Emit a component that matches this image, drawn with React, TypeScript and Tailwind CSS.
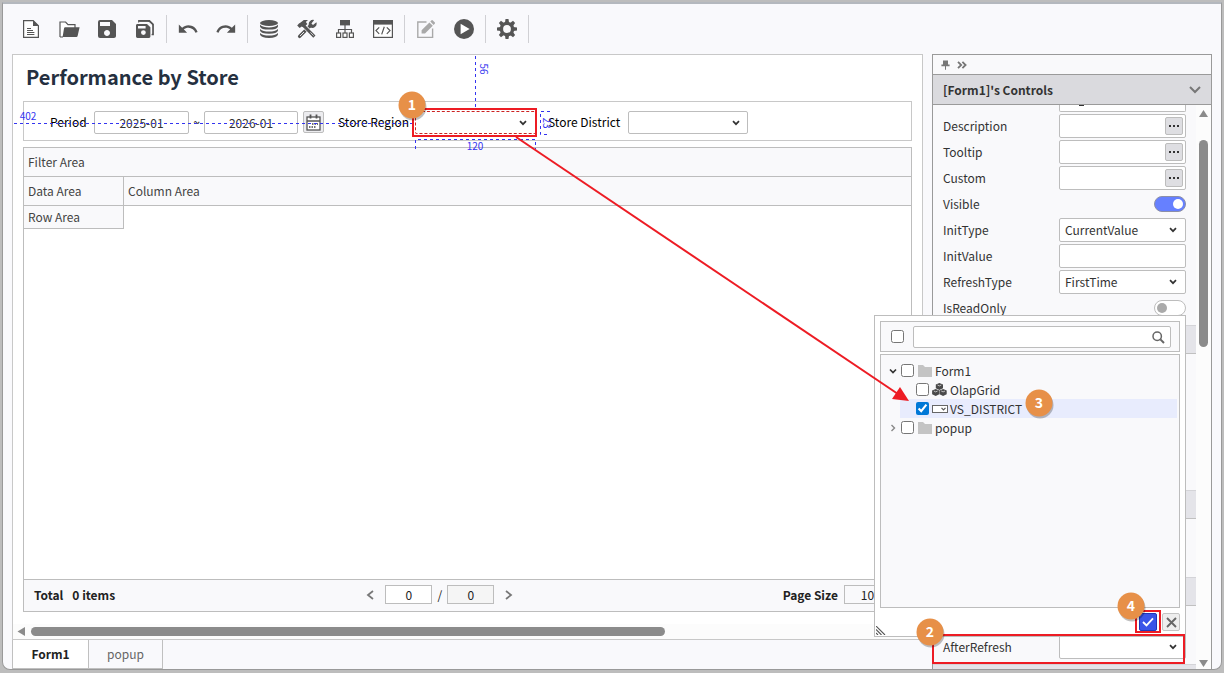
import React from 'react';
import { MdSave, MdUndo, MdRedo } from 'react-icons/md';

const INK = '#555555';

const Chevron: React.FC<{ className?: string }> = ({ className = '' }) => (
  <svg width="8" height="6" viewBox="0 0 8 6" className={`pointer-events-none ${className}`}>
    <path d="M1 1.2 L4 4.2 L7 1.2" fill="none" stroke="#333" strokeWidth="1.7" />
  </svg>
);

const FileIcon = () => (
  <svg width="20" height="20" viewBox="0 0 20 20">
    <path d="M2.6 1.6 H12.2 L17.4 6.8 V18.4 H2.6 Z" fill="#fff" stroke={INK} strokeWidth="1.2" />
    <path d="M12 1.2 V7 H17.8 Z" fill={INK} />
    <path d="M6 9.5 H10 M6 11.5 H12 M6 13.5 H13.4 M6 15.5 H13.4" stroke={INK} strokeWidth="1" />
  </svg>
);

const FolderOpenIcon = () => (
  <svg width="22" height="20" viewBox="0 0 22 20">
    <path d="M2 18 V3 H7.6 L10 5.6 H17 V9" fill="#fff" stroke={INK} strokeWidth="1.2" />
    <path d="M7.2 8.3 H21.6 L19.6 17 Q19.4 18 18.4 18 H4.6 L6 9.5 Q6.2 8.3 7.2 8.3 Z" fill={INK} />
    <path d="M2 18 H5" stroke={INK} strokeWidth="1.2" />
  </svg>
);

const SaveAllIcon = () => (
  <svg width="20" height="20" viewBox="0 0 20 20">
    <path
      fillRule="evenodd"
      d="M2.5 5 H12 L15.4 8.2 V17.6 Q15.4 19 14 19 H2.5 Q1 19 1 17.6 V6.4 Q1 5 2.5 5 Z M3 7 V9.6 H10.6 V7 Z M8.4 11.2 A2.4 2.4 0 1 0 8.4 16 A2.4 2.4 0 1 0 8.4 11.2 Z"
      fill={INK}
    />
    <path d="M4 3.6 V2 H14.4 L18 5.4 V15.4 H16.6" fill="none" stroke={INK} strokeWidth="1.8" />
    <path d="M4 3.4 H13.2 L16.6 6.6 V15" fill="none" stroke="#f9f9fc" strokeWidth="0.9" />
  </svg>
);

const DatabaseIcon = () => (
  <svg width="20" height="20" viewBox="0 0 20 20" fill={INK}>
    <ellipse cx="10" cy="4" rx="9" ry="3" />
    <path d="M1 5.8 Q4 8.4 10 8.4 T19 5.8 V7.4 Q18 10.6 10 10.6 T1 7.4 Z" />
    <path d="M1 9.9 Q4 12.5 10 12.5 T19 9.9 V11.5 Q18 14.8 10 14.8 T1 11.5 Z" />
    <path d="M1 14 Q4 16.6 10 16.6 T19 14 V15.6 Q18 19 10 19 T1 15.6 Z" />
  </svg>
);

const ToolsIcon = () => (
  <svg width="20" height="20" viewBox="0 0 20 20">
    <path d="M2.6 17.4 L13.6 6.4" stroke={INK} strokeWidth="3.4" strokeLinecap="round" />
    <path d="M3 17 L7 13" stroke="#f9f9fc" strokeWidth="0.9" />
    <path d="M19.4 3.2 L16 6 L14.4 4.4 L17.2 1 A4.4 4.4 0 0 0 12 6.8 L13.4 8.6 A4.4 4.4 0 0 0 19.4 3.2 Z" fill={INK} />
    <path d="M7.4 7.4 L16 16" stroke="#f9f9fc" strokeWidth="4.4" />
    <path d="M6 6 L17.4 17.6" stroke={INK} strokeWidth="3" />
    <path d="M13.4 13.4 L16.6 16.6" stroke="#f9f9fc" strokeWidth="0.7" />
    <path d="M3.6 3.4 L6.8 1 H11 L8.8 3 L10.4 5 L6.6 8.6 L4.8 7.4 L2.6 9 L0.2 6.6 L2 4.6 Z" fill={INK} />
  </svg>
);

const SitemapIcon = () => (
  <svg width="20" height="20" viewBox="0 0 20 20">
    <rect x="5" y="1" width="10" height="5.4" fill={INK} />
    <path d="M10 6 V14 M3.5 14 V10.5 H16.5 V14" fill="none" stroke={INK} strokeWidth="1.2" />
    <g fill="#fff" stroke={INK} strokeWidth="1.2">
      <rect x="1.6" y="14" width="4" height="4.4" />
      <rect x="8" y="14" width="4" height="4.4" />
      <rect x="14.4" y="14" width="4" height="4.4" />
    </g>
  </svg>
);

const CodeIcon = () => (
  <svg width="22" height="20" viewBox="0 0 22 20">
    <rect x="1.6" y="1.6" width="18.8" height="16.8" fill="#fff" stroke={INK} strokeWidth="1.2" />
    <rect x="1" y="1" width="20" height="4.6" fill={INK} />
    <path d="M7.2 8.4 L4 11.6 L7.2 14.8 M14.8 8.4 L18 11.6 L14.8 14.8 M12.3 7.8 L9.7 15.4" fill="none" stroke={INK} strokeWidth="1.2" />
  </svg>
);

const EditIcon = () => (
  <svg width="20" height="20" viewBox="0 0 20 20">
    <path d="M10.5 3 H1.8 V18.4 H16.6 V9.5" fill="none" stroke="#a9a9a9" strokeWidth="1.4" />
    <path d="M5.6 14.6 V11.2 L13.4 3.4 L16.8 6.8 L9 14.6 Z M14.3 2.5 L15.6 1.2 Q16.1 0.8 16.6 1.2 L18.9 3.5 Q19.3 4 18.9 4.6 L17.6 5.9 Z" fill="#a9a9a9" />
  </svg>
);

const PlayIcon = () => (
  <svg width="20" height="20" viewBox="0 0 20 20">
    <circle cx="10" cy="10" r="10" fill={INK} />
    <path d="M6.6 4.8 L15.6 10 L6.6 15.2 Z" fill="#fff" />
  </svg>
);

const GearIcon = () => (
  <svg width="20" height="20" viewBox="0 0 20 20">
    <circle cx="10" cy="10" r="5.6" fill="none" stroke={INK} strokeWidth="3.4" />
    {[0, 45, 90, 135, 180, 225, 270, 315].map((deg) => (
      <path key={deg} d="M8 3.6 L8.5 0 H11.5 L12 3.6 Z" fill={INK} transform={`rotate(${deg} 10 10)`} />
    ))}
  </svg>
);

const toolGroups = [
  [
    { label: 'New', icon: <FileIcon /> },
    { label: 'Open', icon: <FolderOpenIcon /> },
    { label: 'Save', icon: <MdSave size={24} /> },
    { label: 'Save all', icon: <SaveAllIcon /> },
  ],
  [
    { label: 'Undo', icon: <MdUndo size={22} /> },
    { label: 'Redo', icon: <MdRedo size={22} /> },
  ],
  [
    { label: 'Data source', icon: <DatabaseIcon /> },
    { label: 'Tools', icon: <ToolsIcon /> },
    { label: 'Structure', icon: <SitemapIcon /> },
    { label: 'Script', icon: <CodeIcon /> },
  ],
  [
    { label: 'Edit', icon: <EditIcon /> },
    { label: 'Run', icon: <PlayIcon /> },
  ],
  [{ label: 'Settings', icon: <GearIcon /> }],
];

const Toolbar = () => (
  <header className="flex h-[50px] shrink-0 items-center pl-[9px] text-[#555555]">
    {toolGroups.map((group, i) => (
      <div key={i} className="flex items-center">
        {group.map((tool) => (
          <button key={tool.label} aria-label={tool.label} className="flex h-8 w-[38px] items-center justify-center">
            {tool.icon}
          </button>
        ))}
        <div className="mx-[2px] h-7 w-px bg-[#d0d0d4]"></div>
      </div>
    ))}
  </header>
);

const FilterBar = () => (
  <div className="mx-[10px] flex h-10 items-center border border-[#c8c8c8] bg-white pt-[2px] pl-[26px] text-black">
    <label htmlFor="from" className="w-11">Period</label>
    <input id="from" defaultValue="2025-01" className="h-[23px] w-[95px] rounded-xs border border-[#bdbdbd] bg-white text-center text-[#333]" />
    <span className="w-[15px] text-center">~</span>
    <input aria-label="Period end" defaultValue="2026-01" className="h-[23px] w-[94px] rounded-xs border border-[#bdbdbd] bg-white text-center text-[#333]" />
    <button aria-label="Calendar" className="ml-[5px] flex h-[22px] w-[21px] items-center justify-center rounded-xs border border-[#bdbdbd] bg-[#ececef]">
      <svg width="15" height="17" viewBox="0 0 15 17">
        <rect x="1" y="3" width="13" height="13" fill="#fff" stroke="#555" strokeWidth="1.3" />
        <path d="M1 7 H14" stroke="#555" strokeWidth="1.3" />
        <path d="M4.5 0.5 V4.5 M10.5 0.5 V4.5" stroke="#555" strokeWidth="1.8" />
        <path d="M6 10 H12 M3 13 H9.5" stroke="#444" strokeWidth="1.6" strokeDasharray="1.5 1" />
      </svg>
    </button>
    <label htmlFor="region" className="ml-[14px] w-[77px]">Store Region</label>
    <div className="relative h-[23px] w-[121px]">
      <select id="region" className="h-full w-full appearance-none rounded-xs border border-dashed border-[#cc2222] bg-white" />
      <Chevron className="absolute top-[9px] right-[9px]" />
    </div>
    <label htmlFor="district" className="ml-3 w-20">Store District</label>
    <div className="relative h-[23px] w-[120px]">
      <select id="district" className="h-full w-full appearance-none rounded-xs border border-[#bdbdbd] bg-white" />
      <Chevron className="absolute top-[9px] right-2" />
    </div>
  </div>
);

const PageArrow: React.FC<{ label: string; d: string }> = ({ label, d }) => (
  <button aria-label={label} className="flex w-2 justify-center">
    <svg width="8" height="10" viewBox="0 0 8 10">
      <path d={d} fill="none" stroke="#777" strokeWidth="1.8" />
    </svg>
  </button>
);

const OlapGrid = () => (
  <div className="mx-[10px] mt-[6px] flex flex-1 flex-col border border-[#bdbdbd] bg-white text-[#444]">
    <div className="flex h-[29px] items-center border-b border-[#bdbdbd] bg-[#f9f9fb] px-1">Filter Area</div>
    <div className="flex h-[29px] border-b border-[#bdbdbd] bg-[#f9f9fb]">
      <div className="flex w-[100px] items-center border-r border-[#bdbdbd] px-1">Data Area</div>
      <div className="flex flex-1 items-center px-1">Column Area</div>
    </div>
    <div className="flex h-[23px] w-[100px] items-center border-r border-b border-[#bdbdbd] bg-[#f9f9fb] px-1">Row Area</div>
    <div className="mt-auto flex h-8 items-center border-t border-[#bdbdbd] bg-[#f9f9fb] pr-5 pb-[2px] pl-[10px] text-[#222]">
      <span className="font-bold">Total</span>
      <span className="ml-[9px] font-bold">0 items</span>
      <div className="mr-[18px] ml-auto flex items-center">
        <PageArrow label="Previous page" d="M7 1 L2 5 L7 9" />
        <input aria-label="Page" defaultValue="0" className="ml-[11px] h-[19px] w-[47px] border border-[#bdbdbd] bg-white text-center" />
        <span className="w-[15px] text-center">/</span>
        <input aria-label="Page count" defaultValue="0" readOnly className="mr-[11px] h-[19px] w-[47px] border border-[#bdbdbd] bg-[#f5f5f5] text-center" />
        <PageArrow label="Next page" d="M1 1 L6 5 L1 9" />
      </div>
      <label htmlFor="page-size" className="mr-[6px] ml-auto font-bold">Page Size</label>
      <input id="page-size" defaultValue="10" className="h-[19px] w-[47px] border border-[#bdbdbd] bg-[#f9f9fb] text-center" />
    </div>
  </div>
);

const Workspace = () => (
  <main className="flex min-w-0 flex-1 flex-col">
    <section className="flex flex-1 flex-col border border-[#c8c8c8] bg-white">
      <h1 className="flex h-[46px] items-center pb-[2px] pl-[13px] text-[20px] font-bold text-[#253040]">Performance by Store</h1>
      <FilterBar />
      <OlapGrid />
      <div className="mt-3 flex h-[15px] items-center bg-[#fcfcfc] pl-1">
        <svg width="8" height="9" viewBox="0 0 8 9">
          <path d="M8 0 V9 L0.5 4.5 Z" fill="#8b8b8b" />
        </svg>
        <div className="ml-[6px] h-[9px] w-[70%] rounded-full bg-[#8b8b8b]"></div>
      </div>
    </section>
    <nav className="flex h-[29px]">
      <button className="w-[77px] border-x border-b border-[#c0c0c0] bg-white font-bold text-[#222]">Form1</button>
      <button className="w-[74px] border-r border-b border-[#c0c0c0] text-[#666]">popup</button>
    </nav>
  </main>
);

type Field = { label: string; kind: 'more' | 'switch' | 'select' | 'text'; value?: string; on?: boolean };

const fields: Field[] = [
  { label: 'Description', kind: 'more' },
  { label: 'Tooltip', kind: 'more' },
  { label: 'Custom', kind: 'more' },
  { label: 'Visible', kind: 'switch', on: true },
  { label: 'InitType', kind: 'select', value: 'CurrentValue' },
  { label: 'InitValue', kind: 'text' },
  { label: 'RefreshType', kind: 'select', value: 'FirstTime' },
  { label: 'IsReadOnly', kind: 'switch', on: false },
];

const FieldRow: React.FC<{ field: Field }> = ({ field }) => {
  const id = `field-${field.label}`;
  const box = 'h-6 w-full rounded-xs border border-[#bdbdbd] bg-white px-[5px]';
  return (
    <div className="flex h-[26px] shrink-0 items-center justify-between px-[10px]">
      <label htmlFor={id}>{field.label}</label>
      {field.kind === 'switch' ? (
        <span className="relative h-4 w-8">
          <input
            id={id}
            type="checkbox"
            defaultChecked={field.on}
            className="peer h-4 w-8 appearance-none rounded-full border border-[#bdbdbd] bg-white checked:border-[#8c8fa8] checked:bg-[#6680ff]"
          />
          <span className="pointer-events-none absolute top-[3px] left-[3px] h-[10px] w-[10px] rounded-full bg-[#aaaaaa] peer-checked:left-[19px] peer-checked:bg-white"></span>
        </span>
      ) : (
        <div className="relative w-[127px]">
          {field.kind === 'select' ? (
            <select id={id} className={`${box} appearance-none`}>
              {field.value && <option>{field.value}</option>}
            </select>
          ) : (
            <input id={id} className={box} />
          )}
          {field.kind === 'select' && <Chevron className="absolute top-[9px] right-[9px]" />}
          {field.kind === 'more' && (
            <button aria-label={`Edit ${field.label}`} className="absolute top-[3px] right-[3px] flex h-[18px] w-[18px] items-center justify-center gap-[2px] rounded-xs border border-[#bdbdbd] bg-[#dedee2]">
              <i className="h-[2px] w-[2px] bg-[#333]"></i>
              <i className="h-[2px] w-[2px] bg-[#333]"></i>
              <i className="h-[2px] w-[2px] bg-[#333]"></i>
            </button>
          )}
        </div>
      )}
    </div>
  );
};

const Band = () => <div className="h-[29px] shrink-0 border-y border-t-[#d4d4d8] border-b-[#c0c0c0] bg-[#e4e4e9]"></div>;

const ControlsPanel = () => (
  <aside className="flex w-[280px] shrink-0 flex-col border border-b-0 border-[#9a9a9a] bg-[#f9f9fb] text-[#333]">
    <div className="flex h-[19px] shrink-0 items-center gap-[7px] pl-2">
      <svg width="9" height="10" viewBox="0 0 9 10">
        <path d="M2 0.5 H7 V4.5 H8.6 V6.2 H5 V9.8 H4 V6.2 H0.4 V4.5 H2 Z" fill="#777" />
      </svg>
      <svg width="10" height="8" viewBox="0 0 10 8">
        <path d="M1 0.8 L4.2 4 L1 7.2 M5.4 0.8 L8.6 4 L5.4 7.2" fill="none" stroke="#777" strokeWidth="1.8" />
      </svg>
    </div>
    <div className="flex h-[31px] shrink-0 items-center justify-between border-y border-[#9a9a9a] bg-[#dadade] px-[10px]">
      <h2 className="font-bold">[Form1]'s Controls</h2>
      <svg width="12" height="8" viewBox="0 0 12 8">
        <path d="M1 1 L6 6 L11 1" fill="none" stroke="#777" strokeWidth="2" />
      </svg>
    </div>
    <div className="flex min-h-0 flex-1">
      <div className="flex flex-1 flex-col overflow-hidden">
        <div className="mr-[10px] ml-auto h-[7px] w-[127px] shrink-0 rounded-b-xs border border-t-0 border-[#bdbdbd] bg-white pl-[19px]">
          <div className="h-px w-[5px] bg-[#333]"></div>
        </div>
        <div className="mt-px">
          {fields.map((field) => (
            <FieldRow key={field.label} field={field} />
          ))}
        </div>
        <div className="mt-1 flex flex-1 flex-col">
          <Band />
          <div className="h-[136px] shrink-0"></div>
          <Band />
          <div className="h-[58px] shrink-0"></div>
          <Band />
          <div className="h-7 shrink-0"></div>
          <FieldRow field={{ label: 'AfterRefresh', kind: 'select' }} />
          <div className="h-[4px] shrink-0"></div>
          <Band />
        </div>
      </div>
      <div className="flex w-[15px] flex-col items-center bg-[#fcfcfc]">
        <svg width="9" height="7" viewBox="0 0 9 7" className="mt-[5px] shrink-0">
          <path d="M4.5 0 L9 7 H0 Z" fill="#8b8b8b" />
        </svg>
        <div className="mt-[23px] h-[207px] w-[9px] rounded-full bg-[#8b8b8b]"></div>
        <svg width="9" height="7" viewBox="0 0 9 7" className="mt-auto mb-[2px] shrink-0">
          <path d="M0 0 H9 L4.5 7 Z" fill="#8b8b8b" />
        </svg>
      </div>
    </div>
  </aside>
);

const FolderGlyph = () => (
  <svg width="14" height="12" viewBox="0 0 14 12" className="mr-[3px] ml-1">
    <path d="M0 0 H5 L7 2 H14 V12 H0 Z" fill="#c4c4c4" />
  </svg>
);

const CubesGlyph = () => (
  <svg width="15" height="13" viewBox="0 0 15 13" className="mr-[3px] ml-[3px]">
    {['translate(3.7 0)', 'translate(0 6)', 'translate(7.4 6)'].map((t) => (
      <g key={t} transform={t}>
        <path d="M3.7 0 L7.3 1.6 V5.2 L3.7 7 L0.1 5.2 V1.6 Z" fill="#4a4a4a" />
        <path d="M1.8 2 L3.7 2.9 L5.6 2" fill="none" stroke="#ddd" strokeWidth="0.8" />
      </g>
    ))}
  </svg>
);

const ComboGlyph = () => (
  <svg width="16" height="8" viewBox="0 0 16 8" className="mr-[2px] ml-[3px]">
    <rect x="0.5" y="0.5" width="15" height="7" fill="#fff" stroke="#666" />
    <path d="M9.5 2.8 L11.5 4.8 L13.5 2.8" fill="none" stroke="#555" strokeWidth="1.2" />
  </svg>
);

const treeNodes = [
  { label: 'Form1', depth: 0, open: true, icon: <FolderGlyph /> },
  { label: 'OlapGrid', depth: 1, icon: <CubesGlyph /> },
  { label: 'VS_DISTRICT', depth: 1, checked: true, icon: <ComboGlyph /> },
  { label: 'popup', depth: 0, open: false, icon: <FolderGlyph /> },
];

const TargetPicker = () => (
  <div className="absolute top-[315px] right-[38px] flex h-[322px] w-[312px] flex-col border border-[#bdbdbd] bg-white p-[5px] text-[#333]">
    <div className="flex h-[31px] items-center border border-[#bdbdbd] bg-[#f9f9fb] pr-2 pl-[10px]">
      <input type="checkbox" aria-label="Select all" className="h-[13px] w-[13px]" />
      <div className="relative ml-[9px] flex-1">
        <input aria-label="Search" className="block h-[22px] w-full rounded-xs border border-[#bdbdbd] bg-white px-1" />
        <svg width="13" height="13" viewBox="0 0 13 13" className="absolute top-[5px] right-[6px]">
          <circle cx="5.2" cy="5.2" r="4.2" fill="none" stroke="#666" strokeWidth="1.5" />
          <path d="M8.4 8.4 L12 12" stroke="#666" strokeWidth="2" />
        </svg>
      </div>
    </div>
    <ul className="mt-[2px] h-[254px] shrink-0 border border-[#bdbdbd] bg-[#f9f9fb] pt-[6px] pr-[2px]">
      {treeNodes.map((node) => (
        <li key={node.label} className={`flex h-[19px] items-center ${node.depth ? 'ml-[19px] pl-4' : 'pl-2'} ${node.checked ? 'bg-[#e8ecfd]' : ''}`}>
          {node.depth === 0 && (
            <svg width="8" height="8" viewBox="0 0 8 8" className="mr-1">
              {node.open ? (
                <path d="M1 2.5 L4 5.5 L7 2.5" fill="none" stroke="#333" strokeWidth="1.7" />
              ) : (
                <path d="M2.5 1 L5.5 4 L2.5 7" fill="none" stroke="#888" strokeWidth="1.4" />
              )}
            </svg>
          )}
          <label className="flex items-center">
            <input type="checkbox" defaultChecked={node.checked} className="h-[13px] w-[13px] accent-[#0078d7]" />
            {node.icon}
            {node.label}
          </label>
        </li>
      ))}
    </ul>
    <div className="mt-[5px] flex justify-end gap-[5px]">
      <button aria-label="Apply" className="flex h-[18px] w-[18px] items-center justify-center rounded-xs border border-[#2038b8] bg-[#3a55e8]">
        <svg width="12" height="10" viewBox="0 0 12 10">
          <path d="M1 5 L4.5 8.4 L11 1.4" fill="none" stroke="#fff" strokeWidth="1.8" />
        </svg>
      </button>
      <button aria-label="Cancel" className="flex h-[18px] w-[18px] items-center justify-center rounded-xs border border-[#c4c4c4] bg-[#eeeeee]">
        <svg width="11" height="11" viewBox="0 0 11 11">
          <path d="M1 1 L10 10 M10 1 L1 10" stroke="#666" strokeWidth="1.9" />
        </svg>
      </button>
    </div>
    <svg width="10" height="9" viewBox="0 0 10 9" className="absolute bottom-px left-px">
      <path d="M0 0 L9 9 M0 3.5 L5.5 9 M0 7 L2 9" stroke="#555" strokeWidth="1.1" />
    </svg>
  </div>
);

const steps = [
  { n: 1, x: 412, y: 105 },
  { n: 2, x: 930, y: 632 },
  { n: 3, x: 1039, y: 403 },
  { n: 4, x: 1131, y: 606 },
];

const Annotations = () => (
  <svg className="pointer-events-none absolute inset-0 h-full w-full">
    <g fill="none" stroke="#3434f0" strokeWidth="1" strokeDasharray="3 3">
      <path d="M14 123.5 H413" />
      <path d="M475.5 56 V107" />
      <path d="M415.5 149 V139.5 H535.5 V149" />
      <path d="M550 111.5 H540.5 V134.5 H550" />
    </g>
    <g fill="#3434f0" fontSize="10" textAnchor="middle">
      <text x="28" y="120">402</text>
      <text x="475" y="150">120</text>
      <text transform="translate(480 69) rotate(90)">56</text>
      <text transform="translate(543 123) rotate(90)">23</text>
    </g>
    <g fill="none" stroke="#ed1c24" strokeWidth="2">
      <rect x="413" y="109" width="123" height="27" />
      <rect x="933" y="635" width="251" height="28" />
      <rect x="1136" y="611" width="24" height="21" />
      <path d="M516 137 L898 394" />
    </g>
    <path d="M909 401 L892 399 L900 387 Z" fill="#ed1c24" />
    {steps.map((s) => (
      <g key={s.n}>
        <circle cx={s.x + 1} cy={s.y + 2} r="13.5" fill="#000" opacity="0.25" />
        <circle cx={s.x} cy={s.y} r="13.5" fill="#e79048" />
        <text x={s.x} y={s.y + 5} fill="#fff" fontSize="14" fontWeight="700" textAnchor="middle">
          {s.n}
        </text>
      </g>
    ))}
  </svg>
);

export default function App() {
  return (
    <div className="relative h-screen overflow-hidden bg-[#bdbdbd] px-[2px] pt-[2px] pb-[3px] font-['Noto_Sans_CJK_KR','Noto_Sans',sans-serif] text-[12px] leading-4 [&_input]:outline-none">
      <div className="flex h-full flex-col overflow-hidden rounded-b-lg border border-t-2 border-[#999999] border-t-[#b4b8be] bg-[#f9f9fc]">
        <Toolbar />
        <div className="flex min-h-0 flex-1 gap-[9px] px-[9px]">
          <Workspace />
          <ControlsPanel />
        </div>
      </div>
      <TargetPicker />
      <Annotations />
    </div>
  );
}
